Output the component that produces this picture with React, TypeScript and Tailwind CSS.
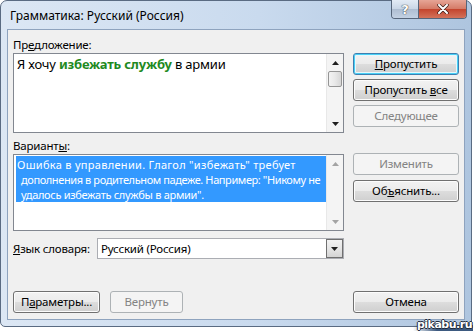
import type { ReactNode } from 'react'

const BTN_BASE = 'h-[22px] rounded-[3px] border flex items-center justify-center text-[11.5px] leading-none'
const BTN_NORMAL =
  'border-[#707070] text-black bg-[linear-gradient(#f2f2f2_0%,#ebebeb_50%,#dddddd_50%,#cfcfcf_100%)] shadow-[inset_0_0_0_1px_#fcfcfc]'
const BTN_DEFAULT =
  'border-[#3c7fb1] text-black bg-[linear-gradient(#f2f2f2_0%,#ebebeb_50%,#dddddd_50%,#cfcfcf_100%)] shadow-[inset_0_0_0_1px_#48d0f6,inset_0_0_0_2px_#e6f7fc]'
const BTN_DISABLED = 'border-[#adb2b5] text-[#838383] bg-[#f4f4f4]'

export default function App() {
  return (
    <div className="relative w-[476px] h-[335px] overflow-hidden bg-white font-['Noto_Sans','Open_Sans',sans-serif]">
      <div className="w-[472px] h-[327px] rounded-t-[7px] rounded-b-[5px] border border-[#5a6b82] bg-[linear-gradient(90deg,#dce7f4_0%,#c9daee_55%,#aec5df_100%)] flex flex-col">
        {/* title bar */}
        <div className="h-[28px] flex items-start">
          <span className="pl-[9px] pt-[7px] text-[12px] leading-[16px] text-black">Грамматика: Русский (Россия)</span>
          <TitleButtons />
        </div>

        {/* client area */}
        <div className="mx-[6px] mb-[6px] flex-1 border border-[#8ea3be] bg-[#f0f0f0] flex flex-col px-[5px] pt-[7px] pb-[6px] text-[11.5px] tracking-[-0.2px] text-black">
          <div className="flex gap-[9px]">
            <div className="w-[331px] flex flex-col">
              <Label>Пр<u>е</u>дложение:</Label>
              <div className="h-[80px] border border-[#828790] bg-white flex">
                <div className="flex-1 min-w-0 pl-[3px] pt-[1px] text-[13px] leading-[18px] tracking-[-0.2px]">
                  Я хочу <span className="font-bold text-[#1f8a1f]">избежать службу</span> в армии
                </div>
                <ScrollBar />
              </div>
            </div>
            <div className="w-[106px] pt-[16px] flex flex-col gap-[4px]">
              <button className={`${BTN_BASE} ${BTN_DEFAULT}`}>
                <u>П</u>ропустить
              </button>
              <button className={`${BTN_BASE} ${BTN_NORMAL}`}>
                Пропустить&nbsp;<u>в</u>се
              </button>
              <button className={`${BTN_BASE} ${BTN_DISABLED}`}>Следующее</button>
            </div>
          </div>

          <div className="flex gap-[9px]">
            <div className="w-[331px] flex flex-col">
              <div className="h-[21px] pt-[5px] leading-[16px]">
                Вариант<u>ы</u>:
              </div>
              <div className="h-[77px] border border-[#828790] bg-white flex">
                <div className="flex-1 min-w-0 overflow-hidden pl-[2px] pt-[1px]">
                  <div className="bg-[#3399ff] text-white pt-[1px] text-[11px] leading-[15px] whitespace-pre">
                    <div className="pl-[1px] tracking-[0.3px]">Ошибка в управлении. Глагол "избежать" требует</div>
                    <div className="pl-[5px] tracking-[-0.4px]">дополнения в родительном падеже. Например: "Никому не</div>
                    <div className="pl-[5px] tracking-[-0.3px]">удалось избежать службы в армии".</div>
                  </div>
                </div>
                <ScrollBar disabled />
              </div>
            </div>
            <div className="w-[106px] pt-[20px] flex flex-col gap-[5px]">
              <button className={`${BTN_BASE} ${BTN_DISABLED}`}>Изменить</button>
              <button className={`${BTN_BASE} ${BTN_NORMAL}`}>
                Об<u>ъ</u>яснить...
              </button>
            </div>
          </div>

          <div className="mt-[7px] flex items-center">
            <span className="w-[84px]">
              <u>Я</u>зык словаря:
            </span>
            <div className="w-[247px] h-[21px] border border-[#abadb3] bg-white flex items-center">
              <span className="flex-1 pl-[3px]">Русский (Россия)</span>
              <div className="w-[17px] h-[19px] border border-[#707070] bg-[linear-gradient(#f2f2f2_0%,#e6e6e6_50%,#d4d4d4_100%)] flex items-center justify-center">
                <Arrow down />
              </div>
            </div>
          </div>

          <div className="mt-auto flex items-center">
            <button className={`${BTN_BASE} ${BTN_NORMAL} w-[87px]`}>
              П<u>а</u>раметры...
            </button>
            <button className={`${BTN_BASE} ${BTN_DISABLED} w-[73px] ml-[10px]`}>Вернуть</button>
            <button className={`${BTN_BASE} ${BTN_NORMAL} w-[106px] ml-auto`}>Отмена</button>
          </div>
        </div>
      </div>

      {/* watermark */}
      <div className="absolute right-[3px] bottom-[4px] h-[6px] w-[60px] bg-[linear-gradient(90deg,transparent,#3d5a80_40%)]" />
      <span className="absolute right-[4px] bottom-[4px] text-[11px] leading-[12px] font-bold text-white font-['DejaVu_Sans',sans-serif] tracking-[-0.5px] [text-shadow:-1px_0_#1f2a3a,1px_0_#1f2a3a,0_-1px_#1f2a3a,0_1px_#1f2a3a]">
        pikabu.ru
      </span>
    </div>
  )
}

function Label({ children }: { children: ReactNode }) {
  return <div className="h-[16px] leading-[16px]">{children}</div>
}

function TitleButtons() {
  return (
    <div className="ml-auto mr-[4px] -mt-[1px] flex h-[19px] rounded-b-[4px] border border-t-0 border-[#56657a] overflow-hidden">
      <div className="w-[27px] flex items-center justify-center bg-[linear-gradient(#e3ebf5_0%,#c9d6e6_50%,#aebdd1_50%,#c3d1e3_100%)] border-r border-[#56657a]">
        <span className="text-[13px] leading-none font-bold text-white font-['DejaVu_Sans',sans-serif] [text-shadow:0_0_1px_#333,0_0_1px_#333]">?</span>
      </div>
      <div className="w-[47px] flex items-center justify-center bg-[linear-gradient(#e6a596_0%,#d47a66_50%,#c3432c_50%,#d3725a_100%)]">
        <svg width="12" height="10" viewBox="0 0 12 10">
          <path d="M2 1 L10 9 M10 1 L2 9" stroke="#3b1c16" strokeWidth="3.4" strokeLinecap="round" />
          <path d="M2 1 L10 9 M10 1 L2 9" stroke="white" strokeWidth="2" strokeLinecap="round" />
        </svg>
      </div>
    </div>
  )
}

function Arrow({ down, disabled }: { down?: boolean; disabled?: boolean }) {
  return (
    <svg width="7" height="4" viewBox="0 0 7 4">
      <path d={down ? 'M0 0 H7 L3.5 4 Z' : 'M0 4 H7 L3.5 0 Z'} fill={disabled ? '#a3a3a3' : '#1f1f1f'} />
    </svg>
  )
}

function ScrollBar({ disabled }: { disabled?: boolean }) {
  return (
    <div className="w-[17px] h-full shrink-0 bg-[#f4f4f4] border-l border-[#e8e8e8] flex flex-col">
      <div className="h-[17px] flex items-center justify-center">
        <Arrow disabled={disabled} />
      </div>
      {!disabled && (
        <div className="mx-[1px] h-[16px] rounded-[2px] border border-[#959595] bg-[linear-gradient(90deg,#f3f3f3_0%,#e8e8e8_50%,#d6d6d6_100%)]" />
      )}
      <div className="flex-1" />
      <div className="h-[17px] flex items-center justify-center">
        <Arrow down disabled={disabled} />
      </div>
    </div>
  )
}
